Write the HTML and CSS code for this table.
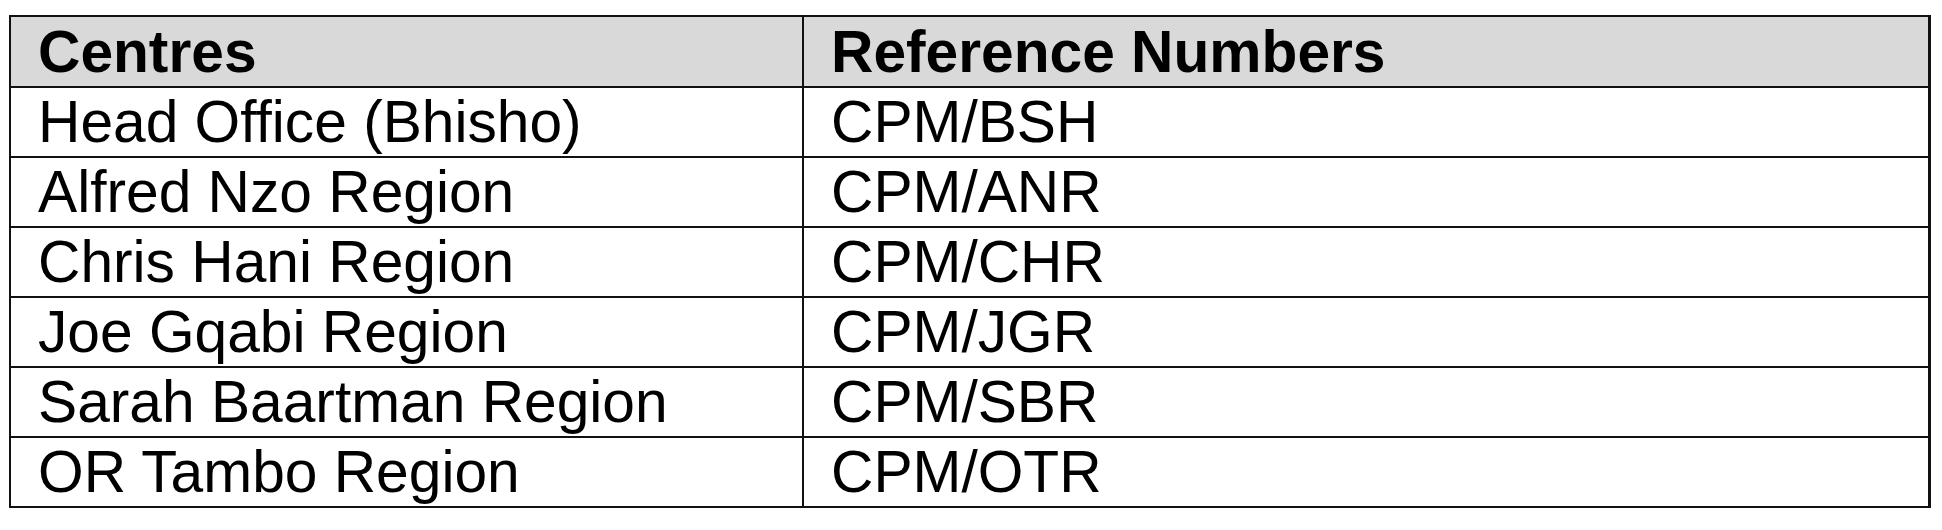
FILE: index.html
```html
<!DOCTYPE html>
<html lang="en">
<head>
<meta charset="utf-8">
<title>Centres</title>
<link rel="stylesheet" href="styles.css">
</head>
<body>
<table class="ref-table">
  <thead>
    <tr class="head-row">
      <th class="cell col-a">Centres</th>
      <th class="cell col-b">Reference Numbers</th>
    </tr>
  </thead>
  <tbody>
    <tr class="row"><td class="cell col-a">Head Office (Bhisho)</td><td class="cell col-b">CPM/BSH</td></tr>
    <tr class="row"><td class="cell col-a">Alfred Nzo Region</td><td class="cell col-b">CPM/ANR</td></tr>
    <tr class="row"><td class="cell col-a">Chris Hani Region</td><td class="cell col-b">CPM/CHR</td></tr>
    <tr class="row"><td class="cell col-a">Joe Gqabi Region</td><td class="cell col-b">CPM/JGR</td></tr>
    <tr class="row"><td class="cell col-a">Sarah Baartman Region</td><td class="cell col-b">CPM/SBR</td></tr>
    <tr class="row"><td class="cell col-a">OR Tambo Region</td><td class="cell col-b">CPM/OTR</td></tr>
  </tbody>
</table>
</body>
</html>
```
FILE: styles.css
```css
html, body {
  margin: 0;
  padding: 0;
  background: #ffffff;
}

body {
  padding: 15px 0 0 9px;
  font-family: "Liberation Sans", Arial, sans-serif;
  color: #000000;
}

.ref-table {
  border-collapse: separate;
  border-spacing: 0;
  table-layout: fixed;
  width: 1922px;
  border-top: 2px solid #111;
  border-left: 2px solid #111;
}

.cell {
  box-sizing: border-box;
  padding: 0 0 0 27px;
  font-size: 58.7px;
  line-height: 68px;
  height: 70px;
  text-align: left;
  vertical-align: middle;
  white-space: nowrap;
  border-bottom: 2px solid #111;
  border-right: 2px solid #111;
}

.col-a {
  width: 793px;
}

.col-b {
  border-right-width: 3px;
}

.head-row .cell {
  background: #d9d9d9;
  font-weight: bold;
  height: 71px;
  line-height: 67px;
}
```
